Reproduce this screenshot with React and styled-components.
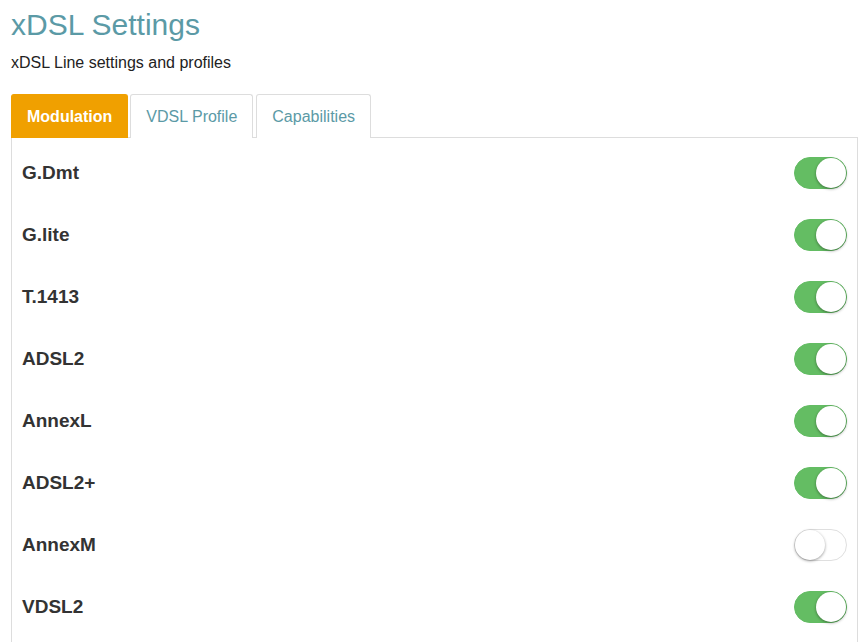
import React, { useState } from "react";
import styled, { createGlobalStyle } from "styled-components";

const GlobalStyle = createGlobalStyle`
  body {
    margin: 0;
    background: #fff;
    font-family: "Liberation Sans", Arial, sans-serif;
    color: #333;
  }
`;

const Page = styled.div`
  padding: 0 7px 0 11px;
`;

const Title = styled.h1`
  margin: 0;
  padding-top: 7px;
  font-size: 30px;
  font-weight: 400;
  line-height: 36px;
  color: #5b9aa6;
`;

const Subtitle = styled.p`
  margin: 10px 0 0;
  font-size: 16px;
  line-height: 19px;
  color: #222;
`;

const Tabs = styled.div`
  display: flex;
  gap: 2px;
  margin-top: 22px;
  border-bottom: 1px solid #ddd;
`;

const Tab = styled.div`
  height: 43px;
  padding: 0 15px;
  display: flex;
  align-items: center;
  font-size: 16px;
  font-weight: ${p => (p.$active ? 700 : 400)};
  color: ${p => (p.$active ? "#fff" : "#5b9aa6")};
  background: ${p => (p.$active ? "#f0a000" : "#fff")};
  border: 1px solid ${p => (p.$active ? "#f0a000" : "#ddd")};
  border-bottom: none;
  border-radius: 3px 3px 0 0;
  margin-bottom: -1px;
  &:nth-child(3) {
    margin-left: 1px;
  }
`;

const Panel = styled.div`
  border: 1px solid #ddd;
  border-top: none;
  padding: 4px 10px 12px 10px;
`;

const Row = styled.div`
  display: flex;
  align-items: center;
  justify-content: space-between;
  height: 62px;
`;

const Label = styled.span`
  font-size: 19px;
  font-weight: 700;
  color: #333;
`;

const Switch = styled.button`
  position: relative;
  width: 53px;
  height: 32px;
  padding: 0;
  border-radius: 16px;
  cursor: pointer;
  border: 1px solid ${p => (p.$on ? "#63bc63" : "#dfdfdf")};
  background: ${p => (p.$on ? "#64bd63" : "#fff")};
`;

const Knob = styled.span`
  position: absolute;
  top: 0;
  left: ${p => (p.$on ? "21px" : "0")};
  width: 30px;
  height: 30px;
  border-radius: 50%;
  background: #fff;
  box-shadow: 0 1px 3px rgba(0, 0, 0, 0.4);
`;

const items = [
  ["G.Dmt", true],
  ["G.lite", true],
  ["T.1413", true],
  ["ADSL2", true],
  ["AnnexL", true],
  ["ADSL2+", true],
  ["AnnexM", false],
  ["VDSL2", true],
];

export default function App() {
  const [state, setState] = useState(items.map(i => i[1]));
  const flip = idx => setState(s => s.map((v, i) => (i === idx ? !v : v)));
  return (
    <Page>
      <GlobalStyle />
      <Title>xDSL Settings</Title>
      <Subtitle>xDSL Line settings and profiles</Subtitle>
      <Tabs>
        <Tab $active>Modulation</Tab>
        <Tab>VDSL Profile</Tab>
        <Tab>Capabilities</Tab>
      </Tabs>
      <Panel>
        {items.map(([name], idx) => (
          <Row key={name}>
            <Label>{name}</Label>
            <Switch $on={state[idx]} onClick={() => flip(idx)}>
              <Knob $on={state[idx]} />
            </Switch>
          </Row>
        ))}
      </Panel>
    </Page>
  );
}
